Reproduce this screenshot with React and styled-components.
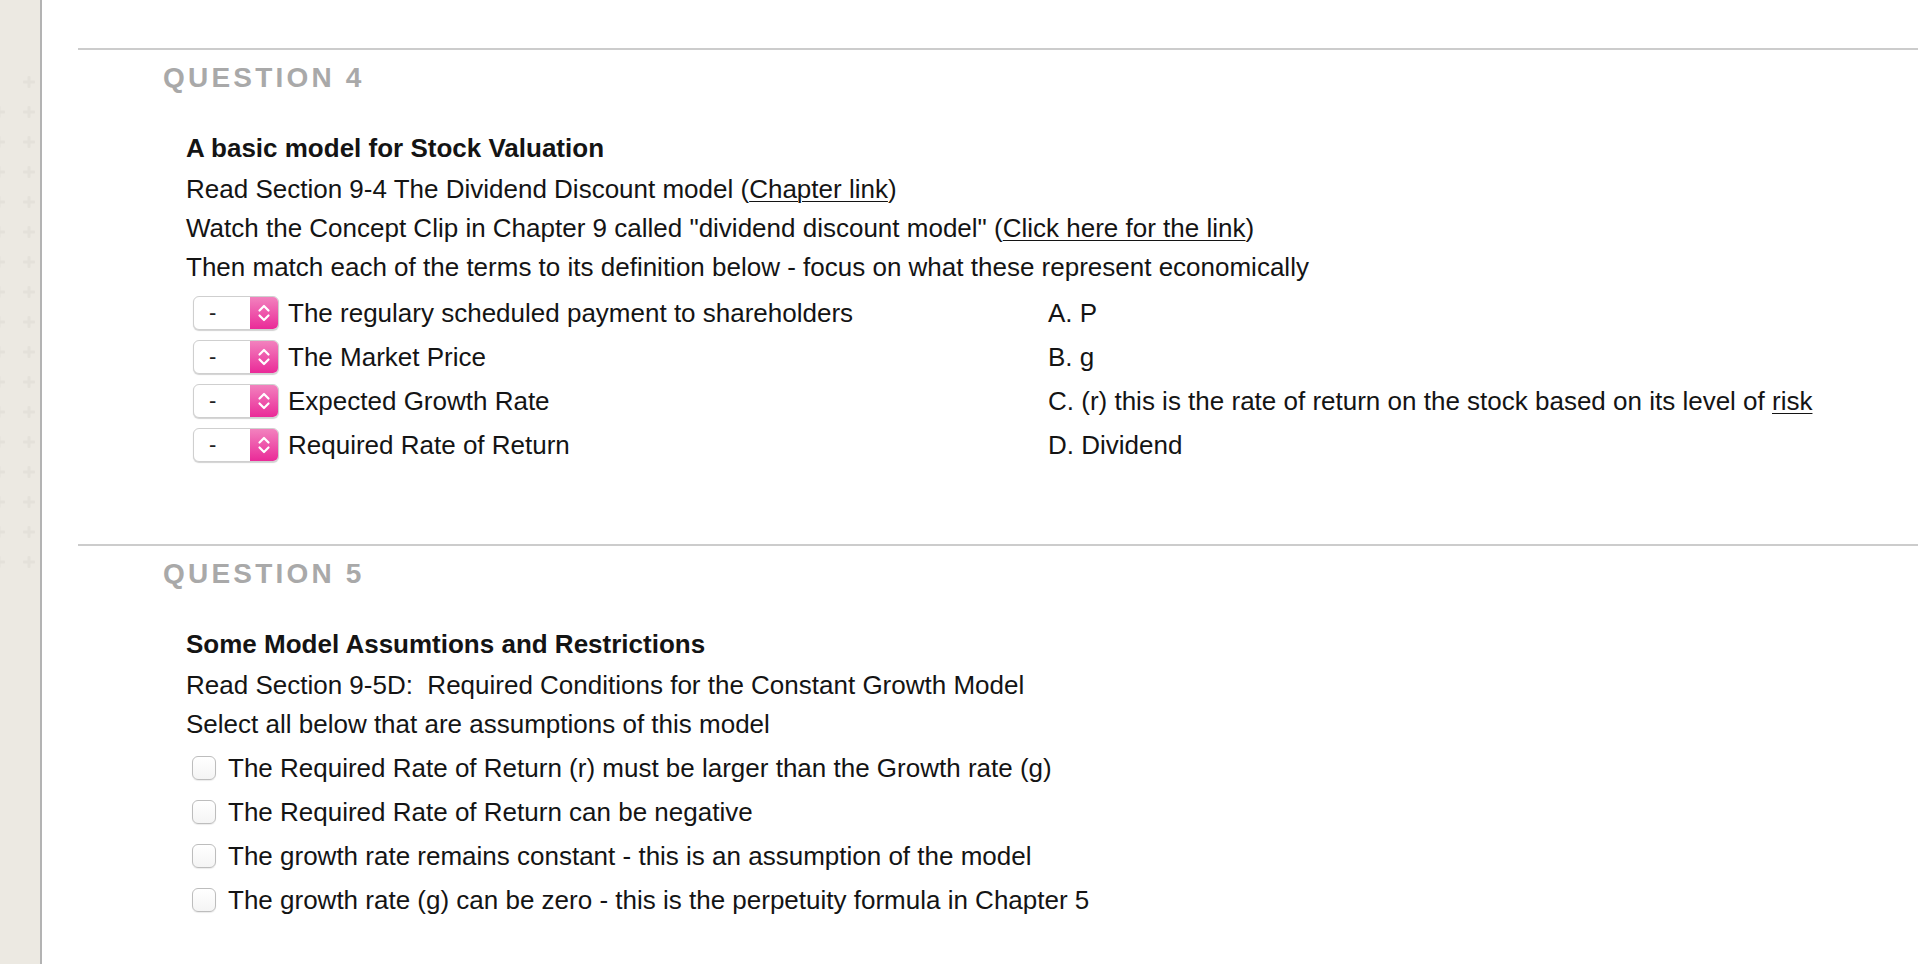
import React from 'react'
import styled, { createGlobalStyle } from 'styled-components'

const GlobalStyle = createGlobalStyle`
  html, body, #root {
    margin: 0;
    height: 100%;
  }
  body {
    background: #ffffff;
    font-family: "Liberation Sans", Arial, sans-serif;
    color: #141414;
  }
`

const Page = styled.div`
  display: flex;
  min-height: 100vh;
`

const Sidebar = styled.aside`
  position: relative;
  flex: 0 0 40px;
  background: #ece9e2;
  border-right: 2px solid #b3b3b3;
  overflow: hidden;
`

const SidebarPattern = styled.svg`
  position: absolute;
  left: 0;
  top: 0;
`

const Main = styled.main`
  flex: 1;
  padding: 48px 0 0 36px;
`

const Question = styled.section`
  border-top: 2px solid #cccccc;
  padding: 8px 0 ${p => p.$bottom}px 0;
`

const QuestionTitle = styled.h2`
  margin: 0 0 0 85px;
  font-size: 28px;
  line-height: 40px;
  font-weight: bold;
  letter-spacing: 3.2px;
  color: #a9a9a9;
`

const Body = styled.div`
  margin: 31px 0 0 108px;
  font-size: 26px;
  line-height: 39px;
`

const Heading = styled.div`
  font-weight: bold;
  margin-bottom: 2px;
`

const Line = styled.div``

const Link = styled.a`
  color: inherit;
  text-decoration: underline;
  text-underline-offset: 3px;
  text-decoration-thickness: 1px;
`

const MatchList = styled.div`
  margin-top: 4px;
`

const MatchRow = styled.div`
  display: grid;
  grid-template-columns: 862px 1fr;
  align-items: center;
  height: 44px;
`

const MatchLeft = styled.div`
  display: flex;
  align-items: center;
  gap: 9px;
  padding-left: 7px;
`

const Select = styled.div`
  display: flex;
  width: 86px;
  height: 34px;
  box-sizing: border-box;
  border: 1px solid #cfcfcf;
  border-radius: 6px;
  background: #ffffff;
  box-shadow: 0 1px 1px rgba(0, 0, 0, 0.18);
  overflow: hidden;
`

const SelectValue = styled.span`
  flex: 1;
  padding-left: 15px;
  font-size: 22px;
  line-height: 32px;
  color: #222;
`

const SelectArrow = styled.span`
  width: 28px;
  display: flex;
  align-items: center;
  justify-content: center;
  background: linear-gradient(#f282be, #ea2a98);
`

const Answer = styled.div``

const CheckList = styled.div`
  margin-top: 2px;
`

const CheckRow = styled.label`
  display: flex;
  align-items: center;
  gap: 12px;
  height: 44px;
  padding-left: 6px;
`

const CheckBox = styled.span`
  width: 24px;
  height: 24px;
  box-sizing: border-box;
  border: 1px solid #bdbdbd;
  border-radius: 6px;
  background: linear-gradient(#ffffff, #f4f4f4);
  box-shadow: 0 1px 1px rgba(0, 0, 0, 0.08);
`

const Chevrons = () => (
  <svg width="16" height="24" viewBox="0 0 16 24" fill="none" stroke="#ffffff" strokeWidth="2.2" strokeLinecap="round" strokeLinejoin="round">
    <path d="M3.5 9.5 L8 5 L12.5 9.5" />
    <path d="M3.5 14.5 L8 19 L12.5 14.5" />
  </svg>
)

const Plus = ({ x, y }) => (
  <g fill="#e4e1da">
    <rect x={x - 6} y={y - 1.5} width="12" height="3" rx="1" />
    <rect x={x - 1.5} y={y - 6} width="3" height="12" rx="1" />
  </g>
)

const plusRows = Array.from({ length: 17 }, (_, i) => 82 + i * 30)

const matches = [
  ['The regulary scheduled payment to shareholders', <>A. P</>],
  ['The Market Price', <>B. g</>],
  ['Expected Growth Rate', <>C. (r) this is the rate of return on the stock based on its level of <Link href="#">risk</Link></>],
  ['Required Rate of Return', <>D. Dividend</>],
]

const assumptions = [
  'The Required Rate of Return (r) must be larger than the Growth rate (g)',
  'The Required Rate of Return can be negative',
  'The growth rate remains constant - this is an assumption of the model',
  'The growth rate (g) can be zero - this is the perpetuity formula in Chapter 5',
]

export default function App() {
  return (
    <>
      <GlobalStyle />
      <Page>
        <Sidebar>
          <SidebarPattern width="40" height="600">
            {plusRows.map(y => (
              <React.Fragment key={y}>
                <Plus x={29} y={y} />
                {y > 100 && <Plus x={-1} y={y} />}
              </React.Fragment>
            ))}
          </SidebarPattern>
        </Sidebar>

        <Main>
          <Question $bottom={77}>
            <QuestionTitle>QUESTION 4</QuestionTitle>
            <Body>
              <Heading>A basic model for Stock Valuation</Heading>
              <Line>Read Section 9-4 The Dividend Discount model (<Link href="#">Chapter link</Link>)</Line>
              <Line>Watch the Concept Clip in Chapter 9 called "dividend discount model" (<Link href="#">Click here for the link</Link>)</Line>
              <Line>Then match each of the terms to its definition below - focus on what these represent economically</Line>
              <MatchList>
                {matches.map(([term, answer]) => (
                  <MatchRow key={term}>
                    <MatchLeft>
                      <Select>
                        <SelectValue>-</SelectValue>
                        <SelectArrow><Chevrons /></SelectArrow>
                      </Select>
                      <span>{term}</span>
                    </MatchLeft>
                    <Answer>{answer}</Answer>
                  </MatchRow>
                ))}
              </MatchList>
            </Body>
          </Question>

          <Question $bottom={60}>
            <QuestionTitle>QUESTION 5</QuestionTitle>
            <Body>
              <Heading>Some Model Assumtions and Restrictions</Heading>
              <Line>Read Section 9-5D:&nbsp; Required Conditions for the Constant Growth Model</Line>
              <Line>Select all below that are assumptions of this model</Line>
              <CheckList>
                {assumptions.map(text => (
                  <CheckRow key={text}>
                    <CheckBox />
                    <span>{text}</span>
                  </CheckRow>
                ))}
              </CheckList>
            </Body>
          </Question>
        </Main>
      </Page>
    </>
  )
}
